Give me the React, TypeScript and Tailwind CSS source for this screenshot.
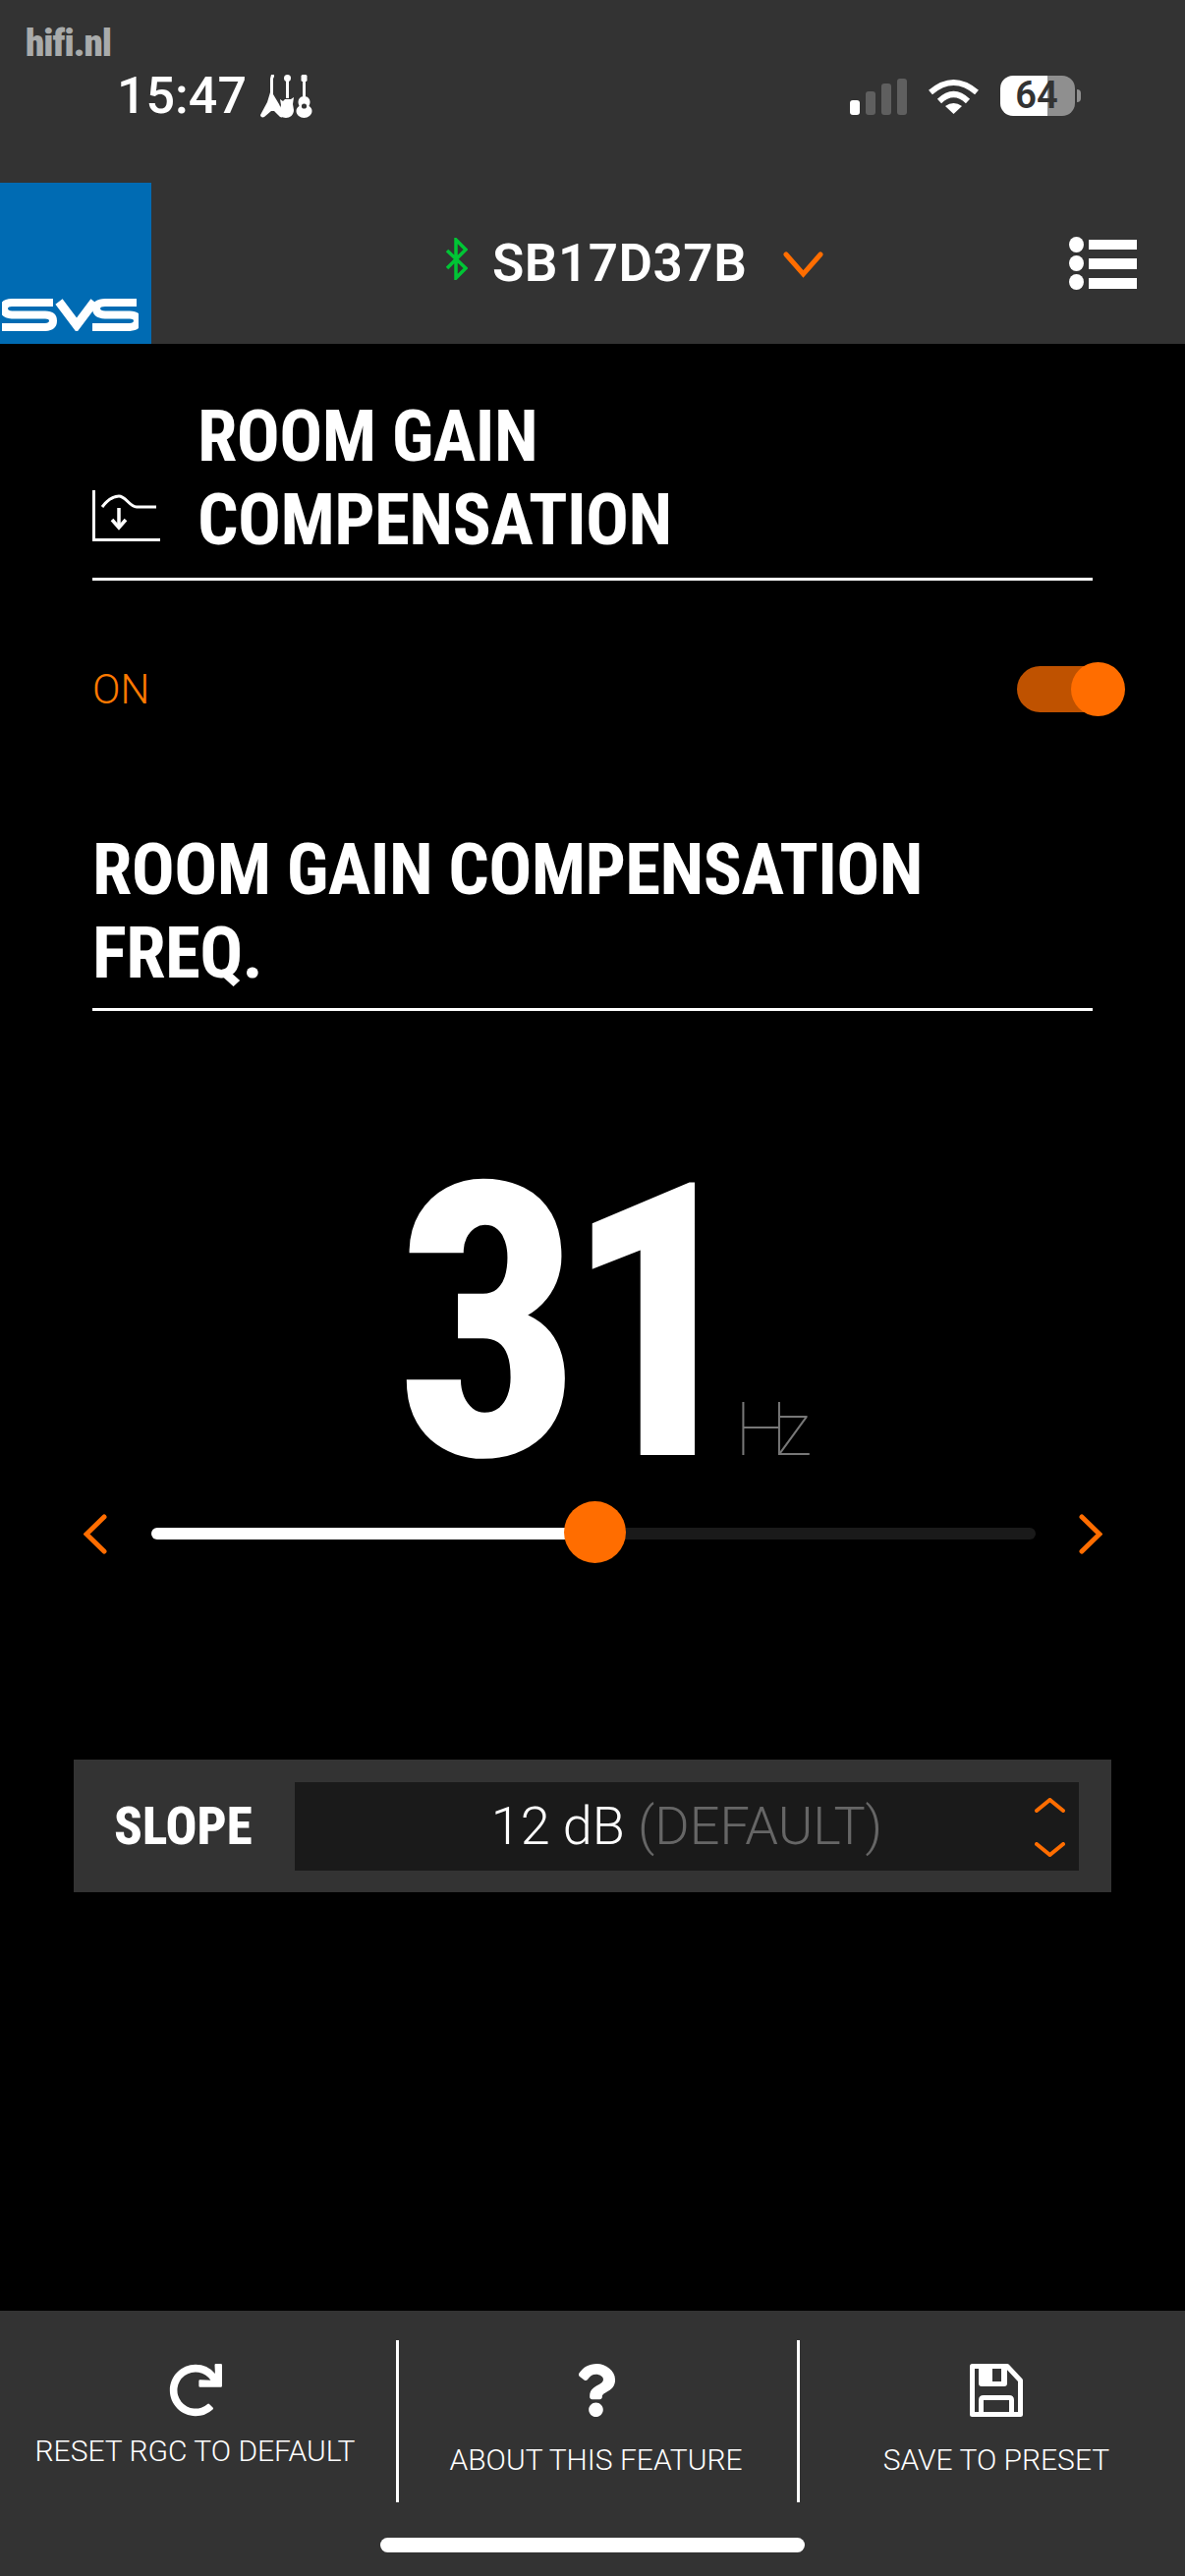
import { FaRedo, FaQuestion } from 'react-icons/fa';

const Chevron = ({ d, className }: { d: string; className: string }) => (
    <svg viewBox="0 0 41 41" className={className} fill="none" stroke="#ff6d00" strokeWidth="5" strokeLinecap="round" strokeLinejoin="miter">
        <path d={d} />
    </svg>
);

function Guitars() {
    return (
        <svg viewBox="0 0 54 44" className="w-[54px] h-[44px] ml-[14px]" fill="white">
            <path d="M11 0h3v2l-1 2v16l6 10 5 11c0 2-2 3-4 2l-6-6h-3l-7 6c-2 1-4 0-4-2l7-13 3-10V4z" />
            <rect x="26" y="2" width="3" height="22" />
            <circle cx="27.5" cy="3.5" r="3.5" />
            <path d="M20 25l3 2 2-2h6l3-2-1 7 1 6c0 5-4 8-8 8s-7-3-7-7l2-6z" />
            <rect x="43" y="2" width="3" height="22" />
            <rect x="41.5" y="0" width="6" height="7" rx="1.5" />
            <path d="M44.5 22c4 0 6 3 6 6 0 2-1 3-1 4 2 1 3 3 3 5 0 4-4 7-8 7s-8-3-8-7c0-2 1-4 3-5 0-1-1-2-1-4 0-3 2-6 6-6z" />
            <circle cx="44.5" cy="32" r="2.6" fill="#333333" />
        </svg>
    );
}

function StatusBar() {
    return (
        <div className="relative h-[186px] shrink-0 bg-[#333333]">
            <span className="absolute left-[26px] top-[20px] text-[39px] leading-[48px] font-black text-[#a9abab] [font-stretch:75%] tracking-[-1px]">hifi.nl</span>
            <div className="flex items-start justify-between pt-[76px] pl-[119px] pr-[106px]">
                <div className="flex items-center">
                    <span className="text-[52px] leading-[44px] font-medium text-white">15:47</span>
                    <Guitars />
                </div>
                <div className="flex items-center pt-[1px]">
                    <div className="flex items-end gap-[6px] h-[40px] pb-[1px]">
                        <div className="w-[10px] h-[15px] rounded-[3px] bg-white" />
                        <div className="w-[10px] h-[24px] rounded-[3px] bg-[#5f5f5f]" />
                        <div className="w-[10px] h-[32px] rounded-[3px] bg-[#5f5f5f]" />
                        <div className="w-[10px] h-[37px] rounded-[3px] bg-[#5f5f5f]" />
                    </div>
                    <svg viewBox="0 0 51 37" className="w-[51px] h-[37px] ml-[22px]" fill="none" stroke="white" strokeWidth="6">
                        <path d="M2 15 Q25.5 -5 49 15" />
                        <path d="M11 24 Q25.5 10 40 24" />
                        <path d="M25.5 37 L17 29 Q25.5 23 34 29 Z" fill="white" stroke="none" />
                    </svg>
                    <div className="ml-[22px] w-[76px] h-[41px] rounded-[13px] bg-[linear-gradient(90deg,#ffffff_63%,#8f8f8f_63%)] flex items-center justify-center">
                        <span className="text-[38px] leading-[41px] font-semibold text-[#333333] -ml-[2px]">64</span>
                    </div>
                    <div className="ml-[2px] w-[4px] h-[13px] rounded-r-full bg-[#8f8f8f]" />
                </div>
            </div>
        </div>
    );
}

function NavBar() {
    return (
        <div className="h-[164px] shrink-0 bg-[#333333] flex items-center">
            <div className="w-[154px] h-full bg-[#006bb3] flex items-end shrink-0 pl-[2px] pb-[13px]">
                <svg viewBox="0 0 139 33" className="w-[139px] h-[33px]" fill="none" stroke="white" strokeWidth="8">
                    <path d="M52 4H10Q2 4 2 10T10 16.5H44Q52 16.5 52 22.5T44 29H0" />
                    <path d="M58 3L76 27L94 3" strokeWidth="9" />
                    <path d="M137 4H105Q96 4 96 10T105 16.5H130Q138 16.5 138 22.5T130 29H92" />
                </svg>
            </div>
            <svg viewBox="0 0 23 43" className="w-[23px] h-[43px] ml-[299px] -mt-[9px]" fill="none" stroke="#00c535" strokeWidth="3.5">
                <path d="M2 13L21 31L11 41V2L21 12L2 31" />
            </svg>
            <span className="ml-[25px] text-[53px] leading-[60px] font-semibold text-white tracking-[0.5px]">SB17D37B</span>
            <Chevron d="M3 3L20.5 23L38 3" className="w-[41px] h-[41px] ml-[37px] mt-[16px]" />
            <svg viewBox="0 0 69 54" className="w-[69px] h-[54px] ml-[250px]" fill="white">
                <ellipse cx="7.5" cy="8" rx="7.5" ry="8" />
                <ellipse cx="7.5" cy="27" rx="7.5" ry="8" />
                <ellipse cx="7.5" cy="46" rx="7.5" ry="8" />
                <rect x="20" y="3" width="49" height="10" />
                <rect x="20" y="22" width="49" height="11" />
                <rect x="20" y="42" width="49" height="11" />
            </svg>
        </div>
    );
}

function Headings() {
    return (
        <div className="px-[94px]">
            <div className="flex items-end border-b-[3px] border-white pt-[52px] pb-[16px]">
                <svg viewBox="0 0 69 52" className="w-[69px] h-[52px] shrink-0 mb-[21px]" fill="none" stroke="white" strokeWidth="3">
                    <path d="M1.5 0V50.5H69" />
                    <path d="M10 17C16 9 22 6 27 6C34 6 38 17 45 17H65" />
                    <path d="M27 18V38" strokeWidth="3.5" />
                    <path d="M20 30L27 38L34 30" strokeWidth="3.5" />
                </svg>
                <h1 className="ml-[38px] text-[73px] leading-[85px] font-bold text-white [font-stretch:75%] tracking-[-0.6px]">ROOM GAIN<br />COMPENSATION</h1>
            </div>
            <div className="flex items-center justify-between -mr-[23px] mt-[83px] h-[55px]">
                <span className="text-[42px] leading-[50px] font-light text-[#ff7a00]">ON</span>
                <div className="relative w-[100px] h-[47px] rounded-full bg-[#bf5200]">
                    <div className="absolute right-[-10px] top-[-4px] w-[55px] h-[55px] rounded-full bg-[#ff6d00]" />
                </div>
            </div>
            <h2 className="mt-[114px] pb-[13px] border-b-[3px] border-white text-[73px] leading-[85px] font-bold text-white [font-stretch:75%] tracking-[-0.6px]">
                ROOM GAIN COMPENSATION<br />FREQ.
            </h2>
        </div>
    );
}

function Readout() {
    return (
        <div className="flex items-baseline justify-center mt-[154px] h-[330px] pl-[2px]">
            <span className="inline-block scale-x-[0.95] text-[390px] leading-[330px] font-extrabold text-white [font-stretch:75%] tracking-[-18px]">31</span>
            <span className="-ml-[7px] text-[76px] leading-[76px] font-thin text-[#777777] tracking-[-12px]">Hz</span>
        </div>
    );
}

function FreqSlider() {
    return (
        <div className="flex items-center justify-between pl-[85px] pr-[84px] mt-[16px] h-[64px]">
            <Chevron d="M21 3L3 20.5L21 38" className="w-[41px] h-[41px] -mr-[17px]" />
            <div className="relative w-[900px] h-[12px] rounded-full bg-[#1a1a1a]">
                <div className="h-full w-[452px] rounded-full bg-white" />
                <div className="absolute left-[420px] top-[-27px] w-[63px] h-[63px] rounded-full bg-[#ff6d00]" />
            </div>
            <svg viewBox="0 0 24 41" className="w-[24px] h-[41px]" fill="none" stroke="#ff6d00" strokeWidth="5" strokeLinecap="round">
                <path d="M3 3L21 20.5L3 38" />
            </svg>
        </div>
    );
}

function SlopeRow() {
    return (
        <div className="mx-[75px] mt-[198px] h-[135px] bg-[#333333] flex items-center pl-[41px] pr-[33px]">
            <span className="w-[184px] shrink-0 text-[53px] leading-[60px] font-extrabold text-white [font-stretch:75%]">SLOPE</span>
            <div className="relative flex-1 h-[90px] bg-[#1a1a1a] flex items-center justify-center">
                <span className="text-[54px] leading-[70px] font-light text-white">
                    12 dB <span className="text-[#666666]">(DEFAULT)</span>
                </span>
                <div className="absolute right-[14px] top-[16px] flex flex-col gap-[30px]">
                    <svg viewBox="0 0 31 15" className="w-[31px] h-[15px]" fill="none" stroke="#ff6d00" strokeWidth="4" strokeLinecap="round">
                        <path d="M2 13L15.5 2L29 13" />
                    </svg>
                    <svg viewBox="0 0 31 15" className="w-[31px] h-[15px]" fill="none" stroke="#ff6d00" strokeWidth="4" strokeLinecap="round">
                        <path d="M2 2L15.5 13L29 2" />
                    </svg>
                </div>
            </div>
        </div>
    );
}

function SaveIcon() {
    return (
        <svg viewBox="0 0 54 54" className="w-[54px] h-[54px]" fill="none" stroke="white" strokeWidth="5">
            <path d="M2.5 2.5H38L51.5 17V51.5H2.5Z" strokeLinejoin="round" />
            <path d="M9 0H38V20Q38 23 35 23H12Q9 23 9 20ZM23 5V18H32V5Z" fill="white" fillRule="evenodd" stroke="none" />
            <path d="M11.5 54V37Q11.5 34.5 14 34.5H40Q42.5 34.5 42.5 37V54" />
        </svg>
    );
}

function BottomBar() {
    const label = 'text-[30px] leading-[36px] font-light text-white whitespace-nowrap';
    return (
        <div className="h-[270px] shrink-0 bg-[#333333] pt-[30px]">
            <div className="flex h-[165px]">
                <div className="w-[403px] flex flex-col items-center pt-[24px] pr-[6px]">
                    <FaRedo className="w-[54px] h-[54px] text-white" />
                    <span className={`${label} mt-[17px]`}>RESET RGC TO DEFAULT</span>
                </div>
                <div className="w-[3px] bg-white" />
                <div className="w-[405px] flex flex-col items-center pt-[24px] pr-[4px]">
                    <FaQuestion className="w-[41px] h-[54px] text-white" />
                    <span className={`${label} mt-[26px]`}>ABOUT THIS FEATURE</span>
                </div>
                <div className="w-[3px] bg-white" />
                <div className="flex-1 flex flex-col items-center pt-[24px] pl-[8px]">
                    <SaveIcon />
                    <span className={`${label} mt-[26px]`}>SAVE TO PRESET</span>
                </div>
            </div>
            <div className="mx-auto mt-[36px] w-[432px] h-[15px] rounded-full bg-white" />
        </div>
    );
}

export default function App() {
    return (
        <div className="w-[1206px] h-[2622px] overflow-hidden bg-black flex flex-col [font-family:Roboto,'Noto_Sans',sans-serif]">
            <StatusBar />
            <NavBar />
            <main className="flex-1">
                <Headings />
                <Readout />
                <FreqSlider />
                <SlopeRow />
            </main>
            <BottomBar />
        </div>
    );
}
